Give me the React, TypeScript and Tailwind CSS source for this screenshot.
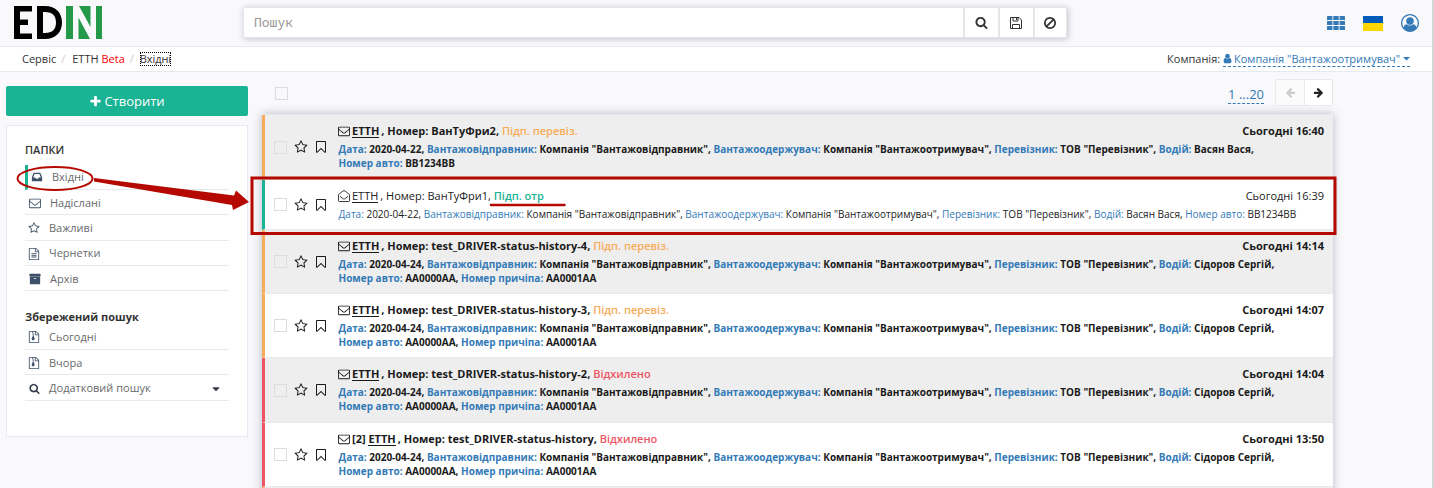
import type { ReactNode } from "react";

const P = {
  search: "M1216 832q0-185-131.5-316.5t-316.5-131.5-316.5 131.5-131.5 316.5 131.5 316.5 316.5 131.5 316.5-131.5 131.5-316.5zm512 832q0 52-38 90t-90 38q-54 0-90-38l-343-342q-179 124-399 124-143 0-273.5-55.5t-225-150-150-225-55.5-273.5 55.5-273.5 150-225 225-150 273.5-55.5 273.5 55.5 225 150 150 225 55.5 273.5q0 220-124 399l343 343q37 37 37 90z",
  ban: "M1440 893q0-161-87-295l-754 753q137 89 297 89 111 0 211.5-43.5t173.5-116.5 116-174.5 43-212.5zm-999 299l755-754q-135-91-300-91-148 0-273 73t-198 199-73 274q0 162 89 299zm1223-299q0 157-61 300t-163.5 246-245 164-298.5 61-298.5-61-245-164-163.5-246-61-300 61-299.5 163.5-245.5 245-164 298.5-61 298.5 61 245 164 163.5 245.5 61 299.5z",
  star: "M1201 1004l306-297-422-62-189-382-189 382-422 62 306 297-73 421 378-199 377 199zm527-357q0 22-26 48l-363 354 86 500q1 7 1 20 0 50-41 50-19 0-40-12l-449-236-449 236q-22 12-40 12-21 0-31.5-14.5t-10.5-35.5q0-6 2-20l86-500-364-354q-25-27-25-48 0-37 56-46l502-73 225-455q19-41 49-41t49 41l225 455 502 73q56 9 56 46z",
  bookmark: "M1408 256h-1024v1242l423-406 89-85 89 85 423 406v-1242zm12-128q23 0 44 9 33 13 52.5 41t19.5 62v1289q0 34-19.5 62t-52.5 41q-19 8-44 8-48 0-83-32l-441-424-441 424q-36 33-83 33-23 0-44-9-33-13-52.5-41t-19.5-62v-1289q0-34 19.5-62t52.5-41q21-9 44-9h1048z",
  envelope: "M1664 1504v-768q-32 36-69 66-268 206-426 338-51 43-83 67t-86.5 48.5-102.5 24.5h-2q-48 0-102.5-24.5t-86.5-48.5-83-67q-158-132-426-338-37-30-69-66v768q0 13 9.5 22.5t22.5 9.5h1472q13 0 22.5-9.5t9.5-22.5zm0-1051v-24.5l-.5-13-3-12.5-5.5-9-9-7.5-14-2.5h-1472q-13 0-22.5 9.5t-9.5 22.5q0 168 147 284 193 152 401 317 6 5 35 29.5t46 37.5 44.5 31.5 50.5 27.5 43 9h2q20 0 43-9t50.5-27.5 44.5-31.5 46-37.5 35-29.5q208-165 401-317 54-43 100.5-115.5t46.5-131.5zm128-37v1088q0 66-47 113t-113 47h-1472q-66 0-113-47t-47-113v-1088q0-66 47-113t113-47h1472q66 0 113 47t47 113z",
  plus: "M1600 736v192q0 40-28 68t-68 28h-416v416q0 40-28 68t-68 28h-192q-40 0-68-28t-28-68v-416h-416q-40 0-68-28t-28-68v-192q0-40 28-68t68-28h416v-416q0-40 28-68t68-28h192q40 0 68 28t28 68v416h416q40 0 68 28t28 68z",
  fileText: "M1596 380q28 28 48 76t20 88v1152q0 40-28 68t-68 28h-1344q-40 0-68-28t-28-68v-1600q0-40 28-68t68-28h896q40 0 88 20t76 48zm-444-244v376h376q-10-29-22-41l-313-313q-12-12-41-22zm384 1528v-1024h-416q-40 0-68-28t-28-68v-416h-768v1536h1280zm-1024-864q0-14 9-23t23-9h704q14 0 23 9t9 23v64q0 14-9 23t-23 9h-704q-14 0-23-9t-9-23v-64zm736 224q14 0 23 9t9 23v64q0 14-9 23t-23 9h-704q-14 0-23-9t-9-23v-64q0-14 9-23t23-9h704zm0 256q14 0 23 9t9 23v64q0 14-9 23t-23 9h-704q-14 0-23-9t-9-23v-64q0-14 9-23t23-9h704z",
  fileZip: "M1596 380q28 28 48 76t20 88v1152q0 40-28 68t-68 28h-1344q-40 0-68-28t-28-68v-1600q0-40 28-68t68-28h896q40 0 88 20t76 48zm-444-244v376h376q-10-29-22-41l-313-313q-12-12-41-22zm384 1528v-1024h-416q-40 0-68-28t-28-68v-416h-256v128h-128v-128h-384v1536h1280zM640 256h128v128h-128zM768 384h128v128h-128zM640 512h128v128h-128zM768 640h128v128h-128zM680 768h190l110 370q30 120-60 190-70 50-152 50t-152-50q-90-70-60-190z",
  archive: "M1088 832q0-26-19-45t-45-19h-256q-26 0-45 19t-19 45 19 45 45 19h256q26 0 45-19t19-45zm576-192v960q0 26-19 45t-45 19h-1408q-26 0-45-19t-19-45v-960q0-26 19-45t45-19h1408q26 0 45 19t19 45zm64-448v256q0 26-19 45t-45 19h-1536q-26 0-45-19t-19-45v-256q0-26 19-45t45-19h1536q26 0 45 19t19 45z",
  inbox: "M1151 960h316q-1-3-2.5-8t-2.5-8l-212-496h-708l-212 496q-1 2-2.5 8t-2.5 8h316l95 192h320zm513 30v482q0 26-19 45t-45 19h-1408q-26 0-45-19t-19-45v-482q0-62 25-123l238-552q10-25 36.5-42t52.5-17h832q26 0 52.5 17t36.5 42l238 552q25 61 25 123z",
  arrow: "M1664 896v128q0 53-32.5 90.5t-84.5 37.5h-704l293 294q38 36 38 90t-38 90l-75 76q-37 37-90 37-52 0-91-37l-651-652q-37-37-37-90 0-52 37-91l651-650q38-38 91-38 52 0 90 38l75 74q38 38 38 91t-38 91l-293 293h704q52 0 84.5 37.5t32.5 90.5z",
  caret: "M1408 704q0 26-19 45l-448 448q-19 19-45 19t-45-19l-448-448q-19-19-19-45t19-45 45-19h896q26 0 45 19t19 45z",
  user: "M1536 1399q0 109-62.5 187t-150.5 78h-854q-88 0-150.5-78t-62.5-187q0-85 8.500-160.500t31.500-152 58.500-131 94-89 134.500-34.500q131 128 313 128t313-128q76 0 134.500 34.500t94 89 58.500 131 31.500 152 8.500 160.500zM1280 512q0 159-112.500 271.500t-271.500 112.500-271.500-112.500-112.500-271.500 112.500-271.500 271.500-112.500 271.500 112.500 112.500 271.500z",
};

function Icon({ name, className = "" }: { name: keyof typeof P; className?: string }) {
  return (
    <svg viewBox="0 0 1792 1792" fill="currentColor" className={`shrink-0 ${className}`}>
      <path d={P[name]} />
    </svg>
  );
}

function OpenEnvelope({ className = "" }: { className?: string }) {
  return (
    <svg viewBox="0 0 12 12" fill="none" stroke="currentColor" strokeWidth="0.9" className={`shrink-0 ${className}`}>
      <path d="M.5 4.600 5 1Q6 .2 7 1l4.500 3.600V10.500q0 1-1 1h-9q-1 0-1-1zM2 6.300l3.200 2.500q.8.6 1.600 0L10 6.300" />
    </svg>
  );
}

function Logo() {
  return (
    <svg viewBox="0 0 90 34" className="h-[34px] w-[90px]">
      <path fill="#000" d="M0 0h18v5.500H6v8h8v5.500H6v8.500h12V33H0zM23 0h8c11 0 17 7 17 16.500S42 33 31 33h-8zM29 6v21h2c7.500 0 11-4 11-10.500S38.500 6 31 6z" />
      <path fill="#229a49" d="M52 0h7v33h-7zM65 0H76.500v21zM64.500 11.500l11.500 21.500h-11.500zM82 0h6v33h-6z" />
    </svg>
  );
}

const folders: { icon: keyof typeof P; label: string; row: string; text: string }[] = [
  { icon: "inbox", label: "Вхідні", row: "h-[25px] border-l-[3px] border-l-[#1ab394] pl-[3px]", text: "ml-[9px]" },
  { icon: "envelope", label: "Надіслані", row: "h-[25px] pl-1 pt-[2px]", text: "ml-[9px]" },
  { icon: "star", label: "Важливі", row: "h-[26px] pl-[3px] pt-[1px]", text: "ml-[9px]" },
  { icon: "fileText", label: "Чернетки", row: "h-[25px] pl-[3px] pt-[1px]", text: "ml-[9px]" },
  { icon: "archive", label: "Архів", row: "h-[25px] pl-1 pt-[2px]", text: "ml-[9px]" },
];

type Item = {
  bar: string; height: string; read?: boolean; shade?: boolean; count?: string;
  number: string; status: string; statusClass: string; time: string; date: string; driver: string; car: string; trailer?: string;
};

const drv = { date: "2020-04-24", driver: "Сідоров Сергій", car: "AA0000AA", trailer: "AA0001AA" };
const items: Item[] = [
  { bar: "border-l-[#f8ac59]", height: "h-[65px]", shade: true, number: "ВанТуФри2", status: "Підп. перевіз.", statusClass: "text-[#f8ac59]", time: "Сьогодні 16:40", date: "2020-04-22", driver: "Васян Вася", car: "BB1234BB" },
  { bar: "border-l-[#1ab394]", height: "h-[50px]", read: true, number: "ВанТуФри1", status: "Підп. отр", statusClass: "text-[#1ab394]", time: "Сьогодні 16:39", date: "2020-04-22", driver: "Васян Вася", car: "BB1234BB" },
  { bar: "border-l-[#f8ac59]", height: "h-16", shade: true, number: "test_DRIVER-status-history-4", status: "Підп. перевіз.", statusClass: "text-[#f8ac59]", time: "Сьогодні 14:14", ...drv },
  { bar: "border-l-[#f8ac59]", height: "h-16", number: "test_DRIVER-status-history-3", status: "Підп. перевіз.", statusClass: "text-[#f8ac59]", time: "Сьогодні 14:07", ...drv },
  { bar: "border-l-[#ed5565]", height: "h-[65px]", shade: true, number: "test_DRIVER-status-history-2", status: "Відхилено", statusClass: "text-[#ed5565]", time: "Сьогодні 14:04", ...drv },
  { bar: "border-l-[#ed5565]", height: "h-16", count: "[2]", number: "test_DRIVER-status-history", status: "Відхилено", statusClass: "text-[#ed5565]", time: "Сьогодні 13:50", ...drv },
];

function Field({ label, children }: { label: string; children: ReactNode }) {
  return (
    <>
      <span className="text-[#337ab7]">{label}:</span> {children}
    </>
  );
}

function Row({ item }: { item: Item }) {
  return (
    <div className={`flex border-b border-b-[#e7eaec] border-l-[3px] ${item.bar} ${item.height} ${item.shade ? "bg-[#eee]" : "bg-white"} ${item.read ? "text-[#222]" : "font-bold text-[#1a1a1a]"}`}>
      <div className="flex w-[73px] shrink-0 items-center pl-[9px]">
        <span className="size-[13px] border border-[#ddd]" />
        <Icon name="star" className="ml-[7px] size-[14px]" />
        <Icon name="bookmark" className="ml-[5.5px] size-[14px]" />
      </div>
      <div className="flex-1 pt-[7px]">
        <div className="flex h-[18px] items-center justify-between pr-[9px] text-[11px] leading-[18px]">
          <div className="flex items-center whitespace-pre">
            {item.read ? <OpenEnvelope className="mr-[2px] size-3" /> : <Icon name="envelope" className="mr-[2px] size-3" />}
            {item.count && <span>{item.count} </span>}
            <span className="mr-[2px] border-b border-current leading-[13px]">ЕТТН</span>
            <span>, Номер: {item.number}, </span>
            <span className={`font-semibold ${item.statusClass}`}>{item.status}</span>
          </div>
          <span>{item.time}</span>
        </div>
        <div className="ml-[0.5px] mt-[2px] w-[970px] text-[10px] leading-[14px]">
          <Field label="Дата">{item.date}, </Field>
          <Field label="Вантажовідправник">Компанія "Вантажовідправник", </Field>
          <Field label="Вантажоодержувач">Компанія "Вантажоотримувач", </Field>
          <Field label="Перевізник">ТОВ "Перевізник", </Field>
          <Field label="Водій">{item.driver}, </Field>
          {!item.read && <br />}
          <Field label="Номер авто">{item.car}{item.trailer ? ", " : ""}</Field>
          {item.trailer && <Field label="Номер причіпа">{item.trailer}</Field>}
        </div>
      </div>
    </div>
  );
}

export default function App() {
  return (
    <div className="relative h-[488px] w-[1434px] overflow-hidden border-r-2 border-[#d6d6d6] bg-[#f9f9fb] font-['Open_Sans','Noto_Sans',sans-serif] text-[11px] text-[#333]">
      <header className="flex h-[46px] items-start">
        <div className="ml-[14px] mt-[6px] w-[229px]"><Logo /></div>
        <div className="mt-[7px] flex h-[31px] w-[824px] border border-[#e5e6e7] bg-white shadow-[1px_1px_6px_rgba(60,70,110,0.3)]">
          <div className="flex flex-1 items-center pl-[10px] font-['Noto_Sans_Mono','DejaVu_Sans_Mono',monospace] text-[13px] text-[#999]">Пошук</div>
          <div className="flex w-[35px] items-center justify-center border-l-2 border-[#e5e6e7]"><Icon name="search" className="size-[13px]" /></div>
          <div className="flex w-[35px] items-center justify-center border-l-2 border-[#e5e6e7]">
            <svg viewBox="0 0 12 12" fill="none" stroke="currentColor" className="mr-px size-3">
              <path d="M.5.5h8.500l2.500 2.500v8.500H.5zM3 .5v3.500h5V.5M6.500 1v2M2.500 11.500V7.500h7v4" />
            </svg>
          </div>
          <div className="flex w-[33px] items-center justify-center border-l-2 border-[#e5e6e7]"><Icon name="ban" className="mr-px size-[14px]" /></div>
        </div>
        <div className="ml-auto mr-[13px] mt-[14px] flex items-center">
          <svg viewBox="0 0 18 14" className="h-[14px] w-[18px]" fill="#337ab7">
            {[0, 5, 10].map((y) => [0, 6.300, 12.600].map((x) => <rect key={`${x}-${y}`} x={x} y={y} width="5.400" height="4" rx="0.6" />))}
          </svg>
          <div className="ml-[18px] h-[15px] w-5 bg-[#ffd500]"><div className="h-[7px] bg-[#005bbb]" /></div>
          <svg viewBox="0 0 1792 1792" className="ml-[18px] size-[18px]" fill="#337ab7">
            <path d="M896 0q182 0 348 71t286 191 191 286 71 348q0 181-70.500 347t-190.500 286-286 191.500-349 71.500-349-71-285.500-191.500-190.500-286-71-347.500 71-348 191-286 286-191 348-71zm619 1351q149-205 149-455 0-156-61-298t-164-245-245-164-298-61-298 61-245 164-164 245-61 298q0 250 149 455 66-327 306-327 131 128 313 128t313-128q240 0 306 327zm-235-647q0-159-112.500-271.500t-271.500-112.500-271.500 112.500-112.500 271.500 112.500 271.500 271.500 112.500 271.500-112.500 112.500-271.500z" fillRule="evenodd" />
          </svg>
        </div>
      </header>

      <nav className="flex h-[26px] items-center justify-between border-y border-[#e7eaec] bg-white pl-[22px] pr-[22px] text-[11px] leading-4">
        <div className="flex items-center">
          <span>Сервіс</span>
          <span className="ml-[5px] mr-[7px] text-[#ccc]">/</span>
          <span>ЕТТН <span className="text-[#ff0000]">Beta</span></span>
          <span className="ml-[5px] mr-[7px] text-[#ccc]">/</span>
          <span className="-ml-px h-[14px] leading-[14px] tracking-[-0.1px] outline-1 -outline-offset-1 outline-dotted outline-black">Вхідні</span>
        </div>
        <div className="flex items-center whitespace-pre">
          <span>Компанія: </span>
          <span className="flex h-4 items-center border-b border-dashed border-[#337ab7] text-[#337ab7]">
            <Icon name="user" className="-ml-px mr-px size-[11px]" />Компанія "Вантажоотримувач" <Icon name="caret" className="-mx-[2px] size-[11px]" />
          </span>
        </div>
      </nav>

      <main className="flex">
        <aside className="ml-[6px] w-[242px] pt-[14px]">
          <button className="flex h-[30px] w-full items-center justify-center gap-[2px] rounded-[2px] bg-[#1ab394] pt-px text-[13px] text-white">
            <Icon name="plus" className="size-[13px]" />Створити
          </button>
          <div className="mt-[9px] h-[312px] border border-[#e7eaf2] bg-white px-[18px] pt-[16px]">
            <h2 className="h-[23px] text-[11px] font-semibold leading-[16px]">ПАПКИ</h2>
            <ul>
              {folders.map((f) => (
                <li key={f.label} className={`flex items-center border-b border-b-[#e7eaec] text-[#676a6c] ${f.row}`}>
                  <Icon name={f.icon} className="size-3 text-[#3f5168]" />
                  <span className={f.text}>{f.label}</span>
                </li>
              ))}
            </ul>
            <h2 className="mt-[18px] h-4 text-[11px] font-bold leading-4">Збережений пошук</h2>
            <ul>
              {["Сьогодні", "Вчора"].map((s, i) => (
                <li key={s} className={`flex h-[25px] items-center border-b border-[#e7eaec] pl-[3px] text-[#676a6c] ${i ? "pt-[2px]" : ""}`}>
                  <Icon name="fileZip" className="size-3 text-[#3f5168]" /><span className="ml-[9px]">{s}</span>
                </li>
              ))}
              <li className="flex h-[26px] items-center border-b border-[#e7eaec] pl-1 pt-[2px] text-[#676a6c]">
                <Icon name="search" className="size-[11px] text-[#333c48]" /><span className="ml-[9px]">Додатковий пошук</span>
                <Icon name="caret" className="ml-auto mr-[7px] size-3 text-[#333c48]" />
              </li>
            </ul>
          </div>
        </aside>

        <section className="ml-[14px] w-[1071px]">
          <div className="flex h-[42px] items-start">
            <span className="ml-[13px] mt-[15px] size-[13px] border border-[#ddd]" />
            <span className="ml-auto mt-[14px] h-[18px] border-b border-dashed border-[#337ab7] text-[13px] leading-[16px] text-[#337ab7]">1 ...20</span>
            <div className="ml-[11px] mt-[7px] flex h-[27px] w-[58px] rounded-[2px] border border-[#e7eaec] bg-white">
              <span className="flex w-[29px] items-center justify-center border-r border-[#e7eaec] bg-[#fbfbfc] text-[#ccc]"><Icon name="arrow" className="size-[11px]" /></span>
              <span className="flex flex-1 items-center justify-center text-[#222]"><Icon name="arrow" className="size-[11px] -scale-x-100" /></span>
            </div>
          </div>
          <div className="border-t border-[#e7eaec] shadow-[0_0_9px_rgba(60,70,110,0.35)]">
            {items.map((item) => <Row key={item.number} item={item} />)}
            <div className="h-4 border-l-[3px] border-l-[#f8ac59] bg-[#eee]" />
          </div>
        </section>
      </main>

      <svg viewBox="0 0 1434 488" className="pointer-events-none absolute left-0 top-0 h-[488px] w-[1434px]" fill="none" stroke="#b40800">
        <ellipse cx="55" cy="178.500" rx="37.500" ry="11.500" strokeWidth="2" />
        <path fill="#b40800" stroke="none" d="M94 178 234 195.500 236 190.500 249 202 233 210 232 205 94 181.500z" />
        <rect x="252" y="178" width="1083" height="55.500" strokeWidth="3" />
        <path d="M491 205h73.500" strokeWidth="2.500" strokeLinecap="round" />
      </svg>
    </div>
  );
}
